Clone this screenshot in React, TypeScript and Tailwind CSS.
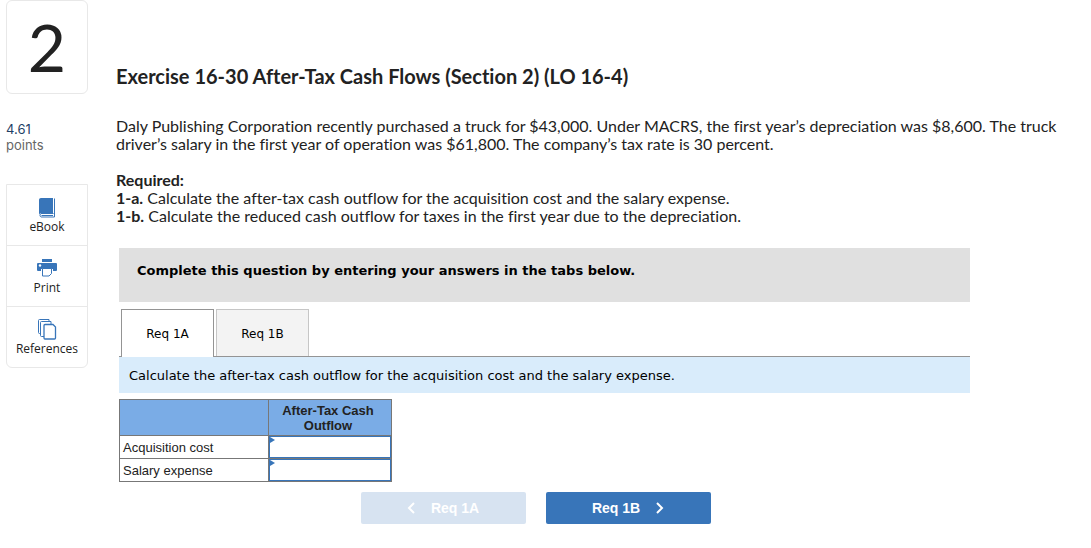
import { useState } from 'react'
import type { ReactNode } from 'react'

function BookIcon() {
  return (
    <svg width="20" height="22" viewBox="0 0 20 22" aria-hidden="true">
      <path d="M4 1h12v15H4.500C3 16 2 17 2 18V3c0-1.200.800-2 2-2z" fill="#3875b9" />
      <path
        d="M17.500 1.500v18.500H4a2 2 0 0 1 0-3.500h12.500M4.500 18.500H16"
        fill="none"
        stroke="#3875b9"
      />
    </svg>
  )
}

function PrintIcon() {
  return (
    <svg width="20" height="22" viewBox="0 0 20 22" aria-hidden="true">
      <path
        d="M5 1h10v3H5zM1 5h18a1 1 0 0 1 1 1v6a1 1 0 0 1-1 1h-3v-2H4v2H1a1 1 0 0 1-1-1V6a1 1 0 0 1 1-1z"
        fill="#3875b9"
      />
      <circle cx="3" cy="7.500" r="1.200" fill="#fff" />
      <path d="M5.500 10.500h9v5l-2.500 2.500H5.500z" fill="#fff" stroke="#3875b9" />
    </svg>
  )
}

function ReferencesIcon() {
  return (
    <svg width="20" height="22" viewBox="0 0 20 22" aria-hidden="true">
      <g fill="#fff" stroke="#3875b9">
        <path d="M2.500.500h9.500v14H2.500a1 1 0 0 1-1-1v-12a1 1 0 0 1 1-1z" />
        <path d="M4.500 2.500H14v15H4.500a1 1 0 0 1-1-1v-13a1 1 0 0 1 1-1z" />
        <path
          d="M8 5.500h8l2.500 2.500v11a1 1 0 0 1-1 1H8a1 1 0 0 1-1-1V6.500a1 1 0 0 1 1-1z"
          strokeWidth="1.300"
        />
      </g>
    </svg>
  )
}

const tools: { label: string; icon: ReactNode }[] = [
  { label: 'eBook', icon: <BookIcon /> },
  { label: 'Print', icon: <PrintIcon /> },
  { label: 'References', icon: <ReferencesIcon /> },
]

const tabs = ['Req 1A', 'Req 1B']

const rows = [
  { id: 'acquisition', label: 'Acquisition cost' },
  { id: 'salary', label: 'Salary expense' },
]

function Sidebar() {
  return (
    <aside className="w-[82px] shrink-0 text-[#222]">
      <div className="flex h-[94px] items-center justify-center rounded-md border border-[#e8e8e8] font-['Lato',sans-serif] text-[66px] leading-none">
        2
      </div>
      <div className="mt-[27px] font-['Inter',sans-serif] text-[13px] leading-4">
        <div className="text-[#1f3f66]">4.61</div>
        <div className="text-[#666]">points</div>
      </div>
      <nav className="mt-[31px] divide-y divide-[#e8e8e8] rounded-b-md border border-[#e8e8e8]">
        {tools.map((tool) => (
          <button
            key={tool.label}
            type="button"
            className="flex h-[61px] w-full flex-col items-center pt-3 font-['Open_Sans',sans-serif] text-xs leading-4 last:h-[60px]"
          >
            {tool.icon}
            {tool.label}
          </button>
        ))}
      </nav>
    </aside>
  )
}

function AnswerTable() {
  return (
    <table className="mt-[6px] w-[273px] table-fixed border-collapse font-['Liberation_Sans',sans-serif] text-[13px] leading-[15px] text-[#222]">
      <thead>
        <tr className="h-9 bg-[#7aace6]">
          <td className="w-[149px] border border-[#777]" />
          <th scope="col" className="border border-[#777] pr-3 pl-2 font-bold">
            After-Tax Cash Outflow
          </th>
        </tr>
      </thead>
      <tbody>
        {rows.map((row) => (
          <tr key={row.id}>
            <th scope="row" className="border border-[#777] px-[3px] text-left font-normal">
              <label htmlFor={row.id}>{row.label}</label>
            </th>
            <td className="relative border border-[#777] p-0">
              <input
                id={row.id}
                type="text"
                className="block h-[22px] w-full border border-[#3875b9] bg-white px-2 text-right outline-none"
              />
              <svg
                className="absolute top-px left-px"
                width="5"
                height="6"
                viewBox="0 0 5 6"
                aria-hidden="true"
              >
                <path d="M0 0l5 3-5 3z" fill="#3875b9" />
              </svg>
            </td>
          </tr>
        ))}
      </tbody>
    </table>
  )
}

function Chevron({ d }: { d: string }) {
  return (
    <svg width="8" height="12" viewBox="0 0 8 12" aria-hidden="true">
      <path d={d} fill="none" stroke="currentColor" strokeWidth="2" />
    </svg>
  )
}

export default function App() {
  const [active, setActive] = useState(0)

  return (
    <div className="flex gap-7 bg-white pr-7 pb-6 pl-[6px]">
      <Sidebar />
      <main className="min-w-0 flex-1 pt-16">
        <div className="font-['Lato',sans-serif] text-base leading-[18px] text-[#222] [font-variant-ligatures:none]">
          <h1 className="text-xl leading-6 font-bold">
            Exercise 16-30 After-Tax Cash Flows (Section 2) (LO 16-4)
          </h1>
          <p className="mt-[29px]">
            Daly Publishing Corporation recently purchased a truck for $43,000. Under MACRS, the
            first year’s depreciation was $8,600. The truck driver’s salary in the first year of
            operation was $61,800. The company’s tax rate is 30 percent.
          </p>
          <p className="mt-[18px] font-bold">Required:</p>
          <p>
            <b>1-a.</b> Calculate the after-tax cash outflow for the acquisition cost and the salary
            expense.
          </p>
          <p>
            <b>1-b.</b> Calculate the reduced cash outflow for taxes in the first year due to the
            depreciation.
          </p>
        </div>

        <section className="mt-[23px] ml-[3px] max-w-[851px] font-['DejaVu_Sans',sans-serif] text-[13px] leading-4 text-black">
          <p className="bg-[#e0e0e0] px-[18px] pt-[15px] pb-[23px] font-bold">
            Complete this question by entering your answers in the tabs below.
          </p>

          <div
            role="tablist"
            className="mt-[7px] flex gap-[2px] border-b border-[#949494] px-[2px]"
          >
            {tabs.map((tab, i) => (
              <button
                key={tab}
                type="button"
                role="tab"
                aria-selected={i === active}
                onClick={() => setActive(i)}
                className={
                  i === active
                    ? '-mb-px h-12 w-[93px] border border-b-0 border-[#949494] bg-white pt-px text-xs'
                    : 'h-[47px] w-[93px] border border-b-0 border-[#c6c6c6] bg-[#f3f3f3] pt-[2px] text-xs'
                }
              >
                {tab}
              </button>
            ))}
          </div>

          <div role="tabpanel">
            <p className="bg-[#d9ecfb] px-[10px] pt-[11px] pb-[9px]">
              Calculate the after-tax cash outflow for the acquisition cost and the salary expense.
            </p>
            <AnswerTable />
          </div>

          <div className="mt-[10px] flex justify-center gap-5 pr-[18px] font-['Liberation_Sans',sans-serif] text-sm font-bold text-white">
            <button
              type="button"
              disabled={active === 0}
              onClick={() => setActive(0)}
              className="flex h-8 w-[165px] items-center justify-center gap-4 rounded-xs bg-[#3875b9] disabled:bg-[#d7e3f1]"
            >
              <Chevron d="M7 1L2 6l5 5" />
              Req 1A
            </button>
            <button
              type="button"
              onClick={() => setActive(1)}
              className="flex h-8 w-[165px] items-center justify-center gap-4 rounded-xs bg-[#3875b9]"
            >
              Req 1B
              <Chevron d="M1 1l5 5-5 5" />
            </button>
          </div>
        </section>
      </main>
    </div>
  )
}
